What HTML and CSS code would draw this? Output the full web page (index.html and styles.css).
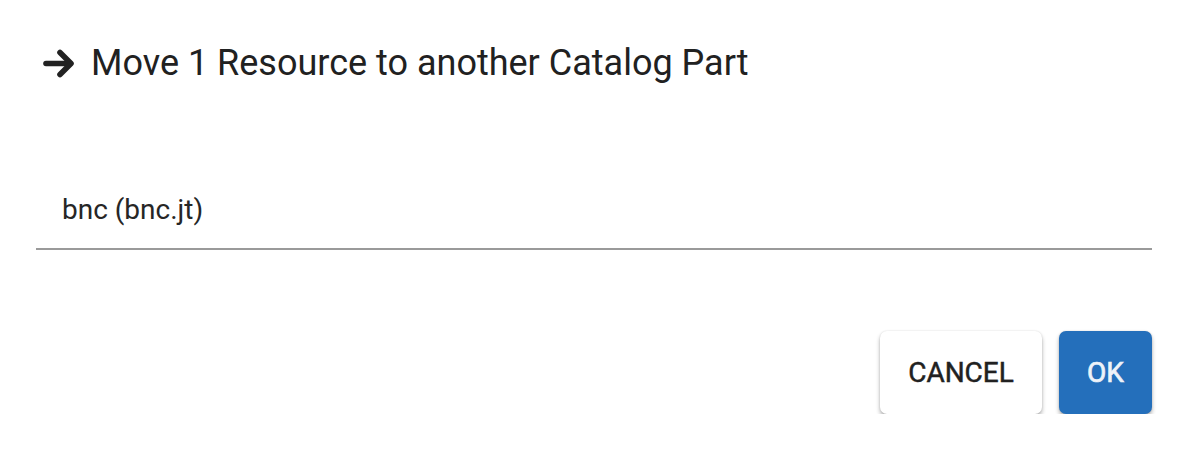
FILE: index.html
```html
<!DOCTYPE html>
<html>
<head>
<meta charset="utf-8">
<link rel="stylesheet" href="styles.css">
</head>
<body>
<div class="dialog">
  <div class="title">
    <svg class="icon" viewBox="0 0 32 32" width="32" height="32"><g fill="none" stroke="#222" stroke-width="5.6" stroke-linecap="round" stroke-linejoin="round"><path d="M3 16.5H27"/><path d="M17 5.5L28 16.5L17 27.5"/></g></svg>
    <span>Move 1 Resource to another Catalog Part</span>
  </div>
  <div class="field">
    <div class="value">bnc (bnc.jt)</div>
  </div>
  <div class="actions">
    <button class="btn cancel">CANCEL</button>
    <button class="btn ok">OK</button>
  </div>
</div>
</body>
</html>
```
FILE: styles.css
```css
html, body {
  margin: 0;
  padding: 0;
  background: #fff;
}
body {
  font-family: Roboto, "Liberation Sans", sans-serif;
  color: #222;
}
.dialog {
  padding: 0 34px 0 36px;
}
.title {
  display: flex;
  align-items: center;
  gap: 16px;
  height: 126px;
  padding-left: 7px;
  font-size: 36px;
  font-weight: 400;
  color: #212121;
}
.title .icon {
  flex: none;
}
.field {
  border-bottom: 2px solid #9a9a9a;
  height: 122px;
  display: flex;
  align-items: flex-end;
}
.value {
  padding-left: 26px;
  padding-bottom: 22px;
  font-size: 28px;
  color: #262626;
}
.actions {
  display: flex;
  justify-content: flex-end;
  gap: 17px;
  margin-top: 81px;
}
.btn {
  font-family: Roboto, "Liberation Sans", sans-serif;
  font-size: 28px;
  font-weight: 400;
  -webkit-text-stroke: 0.45px currentColor;
  border: none;
  border-radius: 7px;
  height: 83px;
  padding: 0;
  box-shadow: 0 3px 4px rgba(0,0,0,0.3), 0 0 2px rgba(0,0,0,0.12);
}
.cancel {
  background: #fff;
  color: #212121;
  width: 162px;
}
.ok {
  background: #246fbb;
  color: #eef3f9;
  width: 93px;
  -webkit-text-stroke: 0.7px currentColor;
}
```
